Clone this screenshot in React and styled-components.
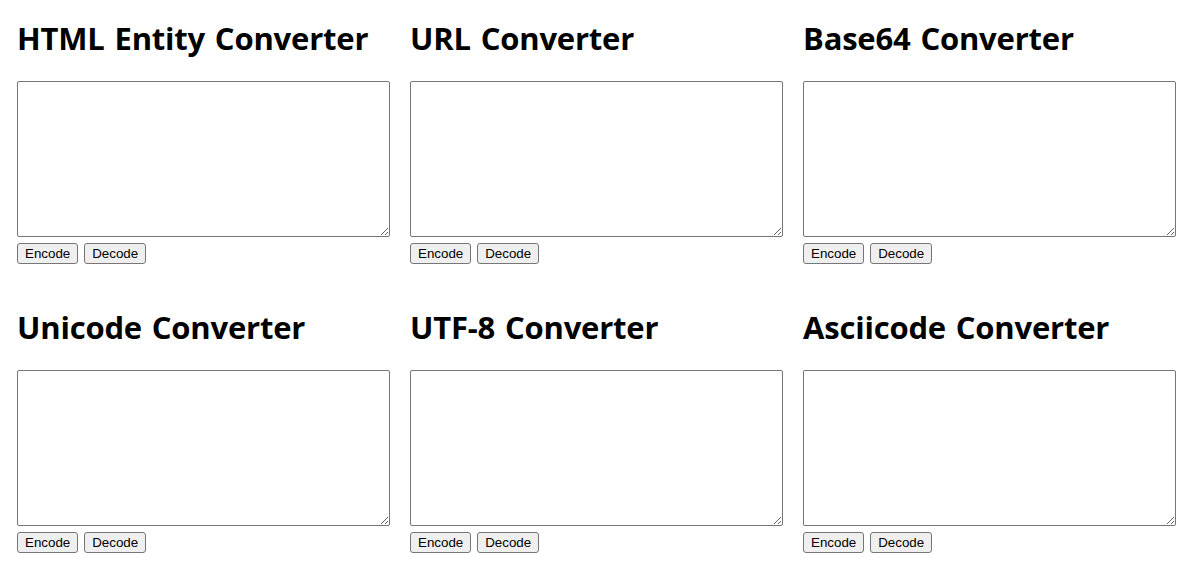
import React from "react";
import styled, { createGlobalStyle } from "styled-components";

const converters = [
  "HTML Entity Converter",
  "URL Converter",
  "Base64 Converter",
  "Unicode Converter",
  "UTF-8 Converter",
  "Asciicode Converter",
];

function Converter({ title }) {
  return (
    <Card>
      <Title>{title}</Title>
      <Input />
      <Actions>
        <Button type="button">Encode</Button>
        <Button type="button">Decode</Button>
      </Actions>
    </Card>
  );
}

export default function App() {
  return (
    <>
      <GlobalStyle />
      <Page>
        {converters.map((title) => (
          <Converter key={title} title={title} />
        ))}
      </Page>
    </>
  );
}

const GlobalStyle = createGlobalStyle`
  body {
    margin: 0;
    background: #fff;
    color: #000;
    font-family: "Open Sans", "Noto Sans CJK KR", sans-serif;
  }
`;

const Page = styled.div`
  display: grid;
  grid-template-columns: repeat(3, 373px);
  column-gap: 20px;
  row-gap: 43px;
  padding: 18px 0 0 17px;
`;

const Card = styled.section`
  display: flex;
  flex-direction: column;
  align-items: flex-start;
`;

const Title = styled.h1`
  margin: 0 0 23px;
  font-size: 31px;
  line-height: 40px;
  font-weight: 700;
  word-spacing: 2px;
  letter-spacing: -0.2px;
  white-space: nowrap;
`;

const Input = styled.textarea`
  box-sizing: border-box;
  width: 373px;
  height: 156px;
  margin: 0;
  border: 1px solid #767676;
  border-radius: 2px;
  padding: 2px;
  font-family: "Liberation Mono", monospace;
  font-size: 13.33px;
  resize: both;
`;

const Actions = styled.div`
  display: flex;
  gap: 6px;
  margin-top: 6px;
`;

const Button = styled.button`
  box-sizing: border-box;
  height: 21px;
  margin: 0;
  padding: 1px 7px;
  border: 1px solid #767676;
  border-radius: 3px;
  background: #efefef;
  color: #000;
  font-family: "Liberation Sans", Arial, sans-serif;
  font-size: 13.33px;
  line-height: 15px;
  cursor: pointer;
`;
